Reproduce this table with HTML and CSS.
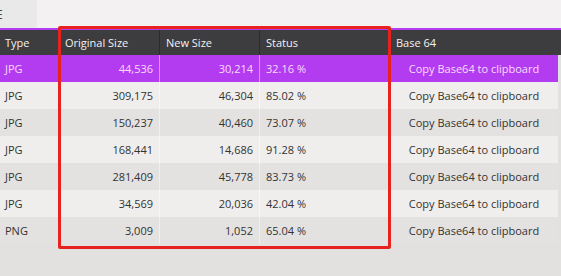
FILE: index.html
```html
<!DOCTYPE html>
<html>
<head>
<meta charset="utf-8">
<link rel="stylesheet" href="styles.css">
</head>
<body>
<div class="app">
  <div class="topbar">
    <div class="tab"><span class="tab-label">E</span></div>
  </div>
  <div class="accent"></div>
  <div class="table">
    <div class="row head">
      <div class="cell">Type</div>
      <div class="cell">Original Size</div>
      <div class="cell">New Size</div>
      <div class="cell">Status</div>
      <div class="cell">Base 64</div>
    </div>
    <div class="row selected">
      <div class="cell">JPG</div>
      <div class="cell num">44,536</div>
      <div class="cell num">30,214</div>
      <div class="cell">32.16 %</div>
      <div class="cell center">Copy Base64 to clipboard</div>
    </div>
    <div class="row light">
      <div class="cell">JPG</div>
      <div class="cell num">309,175</div>
      <div class="cell num">46,304</div>
      <div class="cell">85.02 %</div>
      <div class="cell center">Copy Base64 to clipboard</div>
    </div>
    <div class="row dark">
      <div class="cell">JPG</div>
      <div class="cell num">150,237</div>
      <div class="cell num">40,460</div>
      <div class="cell">73.07 %</div>
      <div class="cell center">Copy Base64 to clipboard</div>
    </div>
    <div class="row light">
      <div class="cell">JPG</div>
      <div class="cell num">168,441</div>
      <div class="cell num">14,686</div>
      <div class="cell">91.28 %</div>
      <div class="cell center">Copy Base64 to clipboard</div>
    </div>
    <div class="row dark">
      <div class="cell">JPG</div>
      <div class="cell num">281,409</div>
      <div class="cell num">45,778</div>
      <div class="cell">83.73 %</div>
      <div class="cell center">Copy Base64 to clipboard</div>
    </div>
    <div class="row light">
      <div class="cell">JPG</div>
      <div class="cell num">34,569</div>
      <div class="cell num">20,036</div>
      <div class="cell">42.04 %</div>
      <div class="cell center">Copy Base64 to clipboard</div>
    </div>
    <div class="row dark">
      <div class="cell">PNG</div>
      <div class="cell num">3,009</div>
      <div class="cell num">1,052</div>
      <div class="cell">65.04 %</div>
      <div class="cell center">Copy Base64 to clipboard</div>
    </div>
  </div>
  <div class="highlight"></div>
</div>
</body>
</html>
```
FILE: styles.css
```css
html, body {
  margin: 0;
  padding: 0;
}
body {
  width: 561px;
  height: 276px;
  overflow: hidden;
  background: #e2e1e0;
  font-family: "Open Sans", "Noto Sans", sans-serif;
  font-size: 11px;
  color: #333333;
}
.app {
  position: relative;
  width: 561px;
  height: 276px;
}
.topbar {
  height: 28px;
  background: #f3f1f1;
  display: flex;
}
.tab {
  width: 37px;
  height: 28px;
  background: #e9e9e9;
  border-bottom-right-radius: 3px;
  display: flex;
  align-items: center;
  overflow: hidden;
}
.tab-label {
  margin-left: -4px;
  color: #444;
  font-size: 12px;
}
.accent {
  height: 2px;
  background: #b43cf0;
}
.table {
  display: flex;
  flex-direction: column;
}
.row {
  display: grid;
  grid-template-columns: 59px 101px 100px 130px 168px;
  height: 27px;
  width: 558px;
}
.row.head {
  height: 25px;
  width: 561px;
  grid-template-columns: 59px 101px 100px 130px 171px;
  background: #3d3c3e;
  color: #f2f2f2;
}
.row.head .cell {
  border-right: 1px solid #2c2b2d;
}
.row.head .cell:last-child {
  border-right: none;
}
.row.selected {
  background: #b43cf0;
  color: #f6dcff;
}
.row.light {
  background: #efeeed;
}
.row.dark {
  background: #e3e2e1;
}
.cell {
  display: flex;
  align-items: center;
  padding: 0 6px;
  white-space: nowrap;
  border-right: 1px solid rgba(255, 255, 255, 0.45);
}
.cell:last-child {
  border-right: none;
}
.row .cell:first-child {
  padding-left: 5px;
}
.cell.num {
  justify-content: flex-end;
}
.cell.center {
  justify-content: center;
}
.highlight {
  position: absolute;
  left: 58px;
  top: 26px;
  width: 327px;
  height: 217px;
  border: 3px solid #e8231f;
  border-radius: 2px;
  pointer-events: none;
}
```
